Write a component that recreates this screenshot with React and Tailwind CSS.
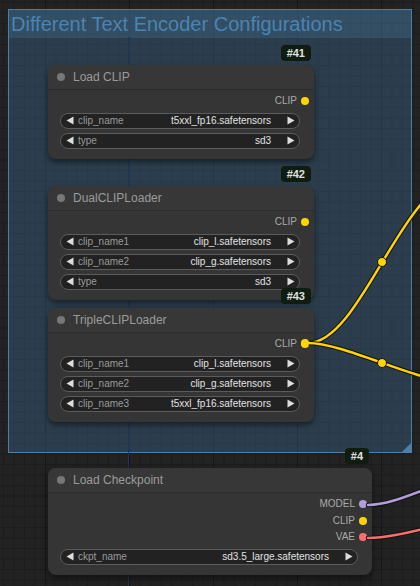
import React from 'react';

const font = "font-['Liberation_Sans',Arial,sans-serif]";

const Arrow = ({ dir }) => (
  <svg width="8" height="9" viewBox="0 0 8 9" className="shrink-0">
    {dir === 'left' ? (
      <polygon points="7.5,0.5 7.5,8.5 0.5,4.5" fill="#dddddd" />
    ) : (
      <polygon points="0.5,0.5 0.5,8.5 7.5,4.5" fill="#dddddd" />
    )}
  </svg>
);

const Widget = ({ label, value }) => (
  <div className="flex items-center h-[16px] ml-[12px] mr-[14px] rounded-full bg-[#222222] border border-[#5c5c5c] pl-[5px] pr-[4px]">
    <Arrow dir="left" />
    <span className="ml-[4px] text-[10px] text-[#9a9a9a] leading-none">{label}</span>
    <span className="flex-1 text-right text-[10px] text-[#e2e2e2] leading-none mr-[16px]">{value}</span>
    <Arrow dir="right" />
  </div>
);

const Output = ({ label, color }) => (
  <div className="flex items-center justify-end gap-[4px] pr-[5px] h-[16.5px]">
    <span className="text-[10px] text-[#aaaaaa] leading-none">{label}</span>
    <span className={`w-[8px] h-[8px] rounded-full ${color}`} />
  </div>
);

const Node = ({ id, title, outputs, widgets, className }) => (
  <div className={`absolute ${className}`}>
    <div className="absolute right-[3px] -top-[20px] h-[16px] px-[6px] rounded-[4px] bg-[#0f1d10] flex items-center">
      <span className="text-[11px] font-bold text-[#e0e0e0] leading-none">#{id}</span>
    </div>
    <div className="rounded-lg bg-[#353535] shadow-[0_3px_6px_rgba(0,0,0,0.5)]">
      <div className="h-[25px] flex items-center gap-[8px] pl-[9px] border-b border-[#2c2c2c] bg-[#373737] rounded-t-lg">
        <span className="w-[8px] h-[8px] rounded-full bg-[#777777]" />
        <span className="text-[12px] text-[#9b9b9b] leading-none">{title}</span>
      </div>
      <div className="pt-[3px] pb-[10px]">
        {outputs.map((o) => (
          <Output key={o.label} label={o.label} color={o.color} />
        ))}
        <div className="mt-[3px] flex flex-col gap-[4px]">
          {widgets.map((w) => (
            <Widget key={w.label} label={w.label} value={w.value} />
          ))}
        </div>
      </div>
    </div>
  </div>
);

const yellow = 'bg-[#ffd500]';

export default function App() {
  return (
    <div className={`relative w-[420px] h-[586px] overflow-hidden bg-[#222222] ${font}`}>
      {/* canvas grid */}
      <div className="absolute inset-0 bg-[linear-gradient(to_right,#1c1c1c_1px,transparent_1px),linear-gradient(to_bottom,#1c1c1c_1px,transparent_1px)] bg-[size:10.5px_10.5px] bg-[position:3px_2px]" />
      <div className="absolute inset-0 bg-[linear-gradient(to_right,#161616_1px,transparent_1px)] bg-[size:84px_84px] bg-[position:45px_0px]" />

      {/* group */}
      <div className="absolute left-[8px] top-[9px] w-[404px] h-[444px] border border-[#4b7ea6] bg-[#3e72a0]/35">
        <div className="h-[28px] flex items-center pl-[2px] bg-[#4a7ea8]/25">
          <span className="text-[20px] leading-none text-[#4a84b3] whitespace-nowrap">
            Different Text Encoder Configurations
          </span>
        </div>
        <div className="absolute right-0 bottom-0 w-0 h-0 border-l-[9px] border-l-transparent border-b-[9px] border-b-[#4b80ab]" />
      </div>

      {/* link running under the nodes */}
      <div className="absolute left-[128px] top-[37px] w-px h-[549px] bg-[#1f3566]" />

      <Node
        id="41"
        title="Load CLIP"
        className="left-[48px] top-[65px] w-[266px]"
        outputs={[{ label: 'CLIP', color: yellow }]}
        widgets={[
          { label: 'clip_name', value: 't5xxl_fp16.safetensors' },
          { label: 'type', value: 'sd3' },
        ]}
      />
      <Node
        id="42"
        title="DualCLIPLoader"
        className="left-[48px] top-[186px] w-[266px]"
        outputs={[{ label: 'CLIP', color: yellow }]}
        widgets={[
          { label: 'clip_name1', value: 'clip_l.safetensors' },
          { label: 'clip_name2', value: 'clip_g.safetensors' },
          { label: 'type', value: 'sd3' },
        ]}
      />
      <Node
        id="43"
        title="TripleCLIPLoader"
        className="left-[48px] top-[308px] w-[266px]"
        outputs={[{ label: 'CLIP', color: yellow }]}
        widgets={[
          { label: 'clip_name1', value: 'clip_l.safetensors' },
          { label: 'clip_name2', value: 'clip_g.safetensors' },
          { label: 'clip_name3', value: 't5xxl_fp16.safetensors' },
        ]}
      />
      <Node
        id="4"
        title="Load Checkpoint"
        className="left-[48px] top-[468px] w-[324px]"
        outputs={[
          { label: 'MODEL', color: 'bg-[#b39ddb]' },
          { label: 'CLIP', color: yellow },
          { label: 'VAE', color: 'bg-[#ff6e6e]' },
        ]}
        widgets={[{ label: 'ckpt_name', value: 'sd3.5_large.safetensors' }]}
      />

      {/* links */}
      <svg className="absolute inset-0 pointer-events-none" width="420" height="586">
        <g fill="none" strokeLinecap="round">
          <path d="M308 343 C361 343 403 181 459 181" stroke="#111" strokeWidth="4.5" />
          <path d="M308 343 C361 343 403 181 459 181" stroke="#ffd500" strokeWidth="2.5" />
          <path d="M308 343 C345 343 419 383 459 383" stroke="#111" strokeWidth="4.5" />
          <path d="M308 343 C345 343 419 383 459 383" stroke="#ffd500" strokeWidth="2.5" />
          <path d="M368 505 C400 505 440 478 480 474" stroke="#111" strokeWidth="4.5" />
          <path d="M368 505 C400 505 440 478 480 474" stroke="#b39ddb" strokeWidth="2.5" />
          <path d="M368 538 C400 538 440 522 480 518" stroke="#111" strokeWidth="4.5" />
          <path d="M368 538 C400 538 440 522 480 518" stroke="#ff6e6e" strokeWidth="2.5" />
        </g>
        <circle cx="305" cy="343" r="4" fill="#ffd500" />
        <circle cx="382" cy="262" r="4.5" fill="#ffd500" stroke="#111" strokeWidth="1" />
        <circle cx="382" cy="363" r="4.5" fill="#ffd500" stroke="#111" strokeWidth="1" />
      </svg>
    </div>
  );
}
